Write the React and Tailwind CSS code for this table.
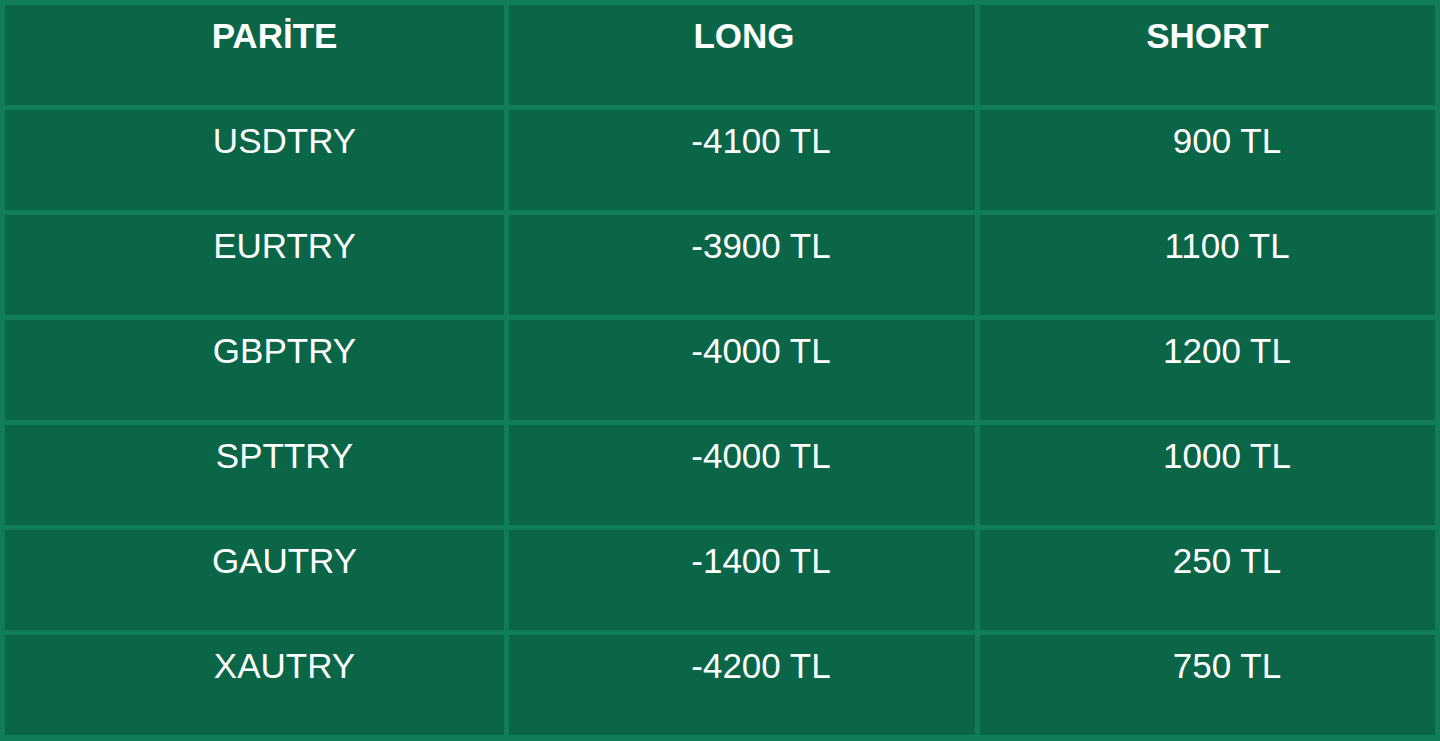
const rows = [
  ["USDTRY", "-4100 TL", "900 TL"],
  ["EURTRY", "-3900 TL", "1100 TL"],
  ["GBPTRY", "-4000 TL", "1200 TL"],
  ["SPTTRY", "-4000 TL", "1000 TL"],
  ["GAUTRY", "-1400 TL", "250 TL"],
  ["XAUTRY", "-4200 TL", "750 TL"],
];

export default function App() {
  return (
    <div
      className="w-[1440px] h-[741px] bg-[#117d58] px-[5px] pt-[5px] pb-[6px] text-white"
      style={{ fontFamily: '"Liberation Sans", Arial, sans-serif' }}
    >
      <div className="grid grid-cols-[499px_466px_455px] auto-rows-[100px] gap-[5px] text-[35px] leading-[40px]">
        {/* Header */}
        <div className="bg-[#0b6648] pt-[11px] pl-[40px] text-center font-bold">PARİTE</div>
        <div className="bg-[#0b6648] pt-[11px] pl-[4px] text-center font-bold">LONG</div>
        <div className="bg-[#0b6648] pt-[11px] text-center font-bold">SHORT</div>

        {rows.map((r) => (
          <div key={r[0]} className="contents">
            <div className="bg-[#0b6648] pt-[11px] pl-[60px] text-center">{r[0]}</div>
            <div className="bg-[#0b6648] pt-[11px] pl-[38px] text-center">{r[1]}</div>
            <div className="bg-[#0b6648] pt-[11px] pl-[39px] text-center">{r[2]}</div>
          </div>
        ))}
      </div>
    </div>
  );
}
